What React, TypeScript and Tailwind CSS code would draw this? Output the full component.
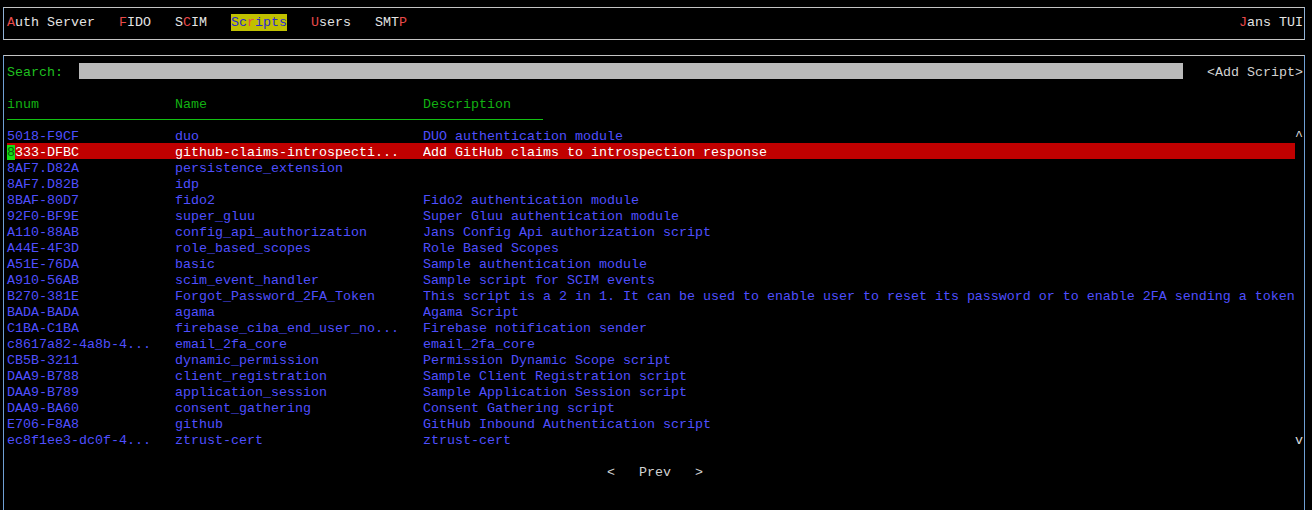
import React from "react";

type Script = { inum: string; name: string; description: string };

const scripts: Script[] = [
    { inum: "5018-F9CF", name: "duo", description: "DUO authentication module" },
    { inum: "8333-DFBC", name: "github-claims-introspecti...", description: "Add GitHub claims to introspection response" },
    { inum: "8AF7.D82A", name: "persistence_extension", description: "" },
    { inum: "8AF7.D82B", name: "idp", description: "" },
    { inum: "8BAF-80D7", name: "fido2", description: "Fido2 authentication module" },
    { inum: "92F0-BF9E", name: "super_gluu", description: "Super Gluu authentication module" },
    { inum: "A110-88AB", name: "config_api_authorization", description: "Jans Config Api authorization script" },
    { inum: "A44E-4F3D", name: "role_based_scopes", description: "Role Based Scopes" },
    { inum: "A51E-76DA", name: "basic", description: "Sample authentication module" },
    { inum: "A910-56AB", name: "scim_event_handler", description: "Sample script for SCIM events" },
    {
        inum: "B270-381E",
        name: "Forgot_Password_2FA_Token",
        description:
            "This script is a 2 in 1. It can be used to enable user to reset its password or to enable 2FA sending a token",
    },
    { inum: "BADA-BADA", name: "agama", description: "Agama Script" },
    { inum: "C1BA-C1BA", name: "firebase_ciba_end_user_no...", description: "Firebase notification sender" },
    { inum: "c8617a82-4a8b-4...", name: "email_2fa_core", description: "email_2fa_core" },
    { inum: "CB5B-3211", name: "dynamic_permission", description: "Permission Dynamic Scope script" },
    { inum: "DAA9-B788", name: "client_registration", description: "Sample Client Registration script" },
    { inum: "DAA9-B789", name: "application_session", description: "Sample Application Session script" },
    { inum: "DAA9-BA60", name: "consent_gathering", description: "Consent Gathering script" },
    { inum: "E706-F8A8", name: "github", description: "GitHub Inbound Authentication script" },
    { inum: "ec8f1ee3-dc0f-4...", name: "ztrust-cert", description: "ztrust-cert" },
];

// menu entries: [before hotkey, hotkey, after hotkey]
const menu: [string, string, string][] = [
    ["", "A", "uth Server"],
    ["", "F", "IDO"],
    ["S", "C", "IM"],
    ["Sc", "r", "ipts"],
    ["", "U", "sers"],
    ["SMT", "P", ""],
];

export default function App() {
    return (
        <div className="h-[510px] w-[1312px] overflow-hidden bg-black font-['Liberation_Mono','Courier_New',monospace] text-[13.333px] leading-[20px] text-[#e4e4e4] whitespace-pre">
            <div className="ml-[3px] mt-[7px] flex h-[33px] w-[1302px] items-start border border-[#c4c4c4] border-x-[#8fb1d6] pl-[3px] pr-[1px] pt-[5px]">
                <div className="flex items-start gap-[24px]">
                    {menu.map(([a, k, b]) => {
                        const active = a + k + b === "Scripts";
                        return (
                            <span key={a + k + b}>
                                <span className={active ? "bg-[#c0c000] py-[1px] text-[#2a2ad0]" : ""}>
                                    {a}
                                    <span className="text-[#e84a4a]">{k}</span>
                                    {b}
                                </span>
                            </span>
                        );
                    })}
                </div>
                <span className="ml-auto">
                    <span className="text-[#e84a4a]">J</span>ans TUI
                </span>
            </div>

            <div className="ml-[3px] mt-[15px] h-[480px] w-[1302px] border-t border-l border-r border-t-[#c4c4c4] border-x-[#6f9fd4] pl-[3px] pt-[7px]">
                <div className="flex h-[16px]">
                    <span className="w-[56px] text-[#1fbf1f]">Search:</span>
                    <div className="ml-[16px] h-[16px] w-[1104px] bg-[#bababa]" />
                    <span className="ml-[24px] text-[#d2d2d2]">{"<Add Script>"}</span>
                </div>
                <div className="h-[16px]" />
                <div className="grid h-[16px] grid-cols-[168px_248px_1fr] text-[#12b012]">
                    <span>inum</span>
                    <span>Name</span>
                    <span>Description</span>
                </div>
                <div className="h-[16px] pt-[8px]">
                    <div className="h-[1px] w-[536px] bg-[#12c012]" />
                </div>
                {scripts.map((s, i) => {
                    const selected = i === 1;
                    return (
                        <div key={s.inum} className="flex h-[16px]">
                            <div
                                className={
                                    selected
                                        ? "grid h-[16px] w-[1288px] grid-cols-[168px_248px_1fr] bg-[#c00000] text-white"
                                        : "grid h-[16px] w-[1288px] grid-cols-[168px_248px_1fr] text-[#4f4fff]"
                                }
                            >
                                <span>
                                    {selected ? (
                                        <>
                                            <span className="bg-[#14e014] text-[#0a5a0a]">{s.inum[0]}</span>
                                            {s.inum.slice(1)}
                                        </>
                                    ) : (
                                        s.inum
                                    )}
                                </span>
                                <span>{s.name}</span>
                                <span className="overflow-hidden">{s.description}</span>
                            </div>
                            <span className="w-[8px] text-[#dcdcdc]">
                                {i === 0 ? "^" : i === scripts.length - 1 ? "v" : ""}
                            </span>
                        </div>
                    );
                })}
                <div className="h-[16px]" />
                <div className="h-[16px] pl-[600px] text-[#d2d2d2]">{"<   Prev   >"}</div>
            </div>
        </div>
    );
}
